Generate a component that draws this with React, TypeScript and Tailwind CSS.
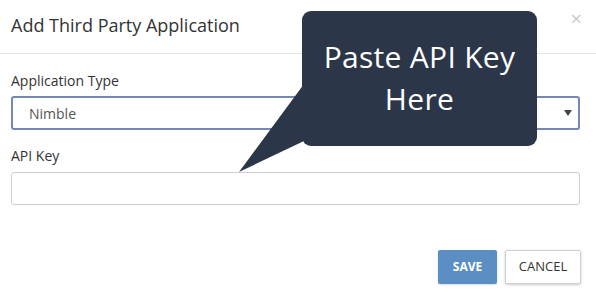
export default function App() {
  return (
    <div className="relative w-[596px] h-[295px] bg-white overflow-hidden font-['Open_Sans',sans-serif] text-[#333]">
      <div className="flex items-center justify-between h-[54px] px-[11px] border-b border-[#e5e5e5]">
        <h4 className="text-[18px] text-[#333] leading-none pb-[4px]">Add Third Party Application</h4>
        <button className="text-[#c8c8c8] text-[20px] leading-none mr-[3px] mb-[16px]">×</button>
      </div>

      <div className="px-[11px] pt-[17px]">
        <label className="block text-[14px] leading-[20px] text-[#333]">Application Type</label>
        <div className="mt-[5px] flex items-center justify-between h-[34px] w-[569px] border-2 border-[#7587b5] rounded-[3px] px-[16px] pr-[6px]">
          <span className="text-[14px] text-[#555]">Nimble</span>
          <svg width="8" height="6" viewBox="0 0 8 6">
            <path d="M0 0h8L4 6z" fill="#444" />
          </svg>
        </div>

        <label className="block mt-[16px] text-[14px] leading-[20px] text-[#333]">API Key</label>
        <div className="mt-[6px] h-[33px] w-[569px] border border-[#cfcfcf] rounded-[3px]" />

        <div className="flex justify-end gap-[8px] mt-[45px] pr-[4px]">
          <button className="h-[34px] w-[59px] bg-[#5b8fc3] text-white text-[12px] font-bold rounded-[2px] shadow-[0_1px_2px_rgba(0,0,0,0.15)]">SAVE</button>
          <button className="h-[34px] w-[76px] bg-white border border-[#d0d0d0] text-[#333] text-[13px] rounded-[2px] shadow-[0_1px_3px_rgba(0,0,0,0.2)]">CANCEL</button>
        </div>
      </div>

      <svg className="absolute left-0 top-0 pointer-events-none" width="596" height="295">
        <polygon points="304,84 304,141 239,172" fill="#2c3649" />
      </svg>
      <div className="absolute left-[302px] top-[11px] w-[235px] h-[135px] rounded-[9px] bg-[#2c3649] flex items-center justify-center">
        <p className="text-white text-[30px] leading-[42px] text-center tracking-[0.3px] -mt-[2px]">Paste API Key<br />Here</p>
      </div>
    </div>
  )
}
